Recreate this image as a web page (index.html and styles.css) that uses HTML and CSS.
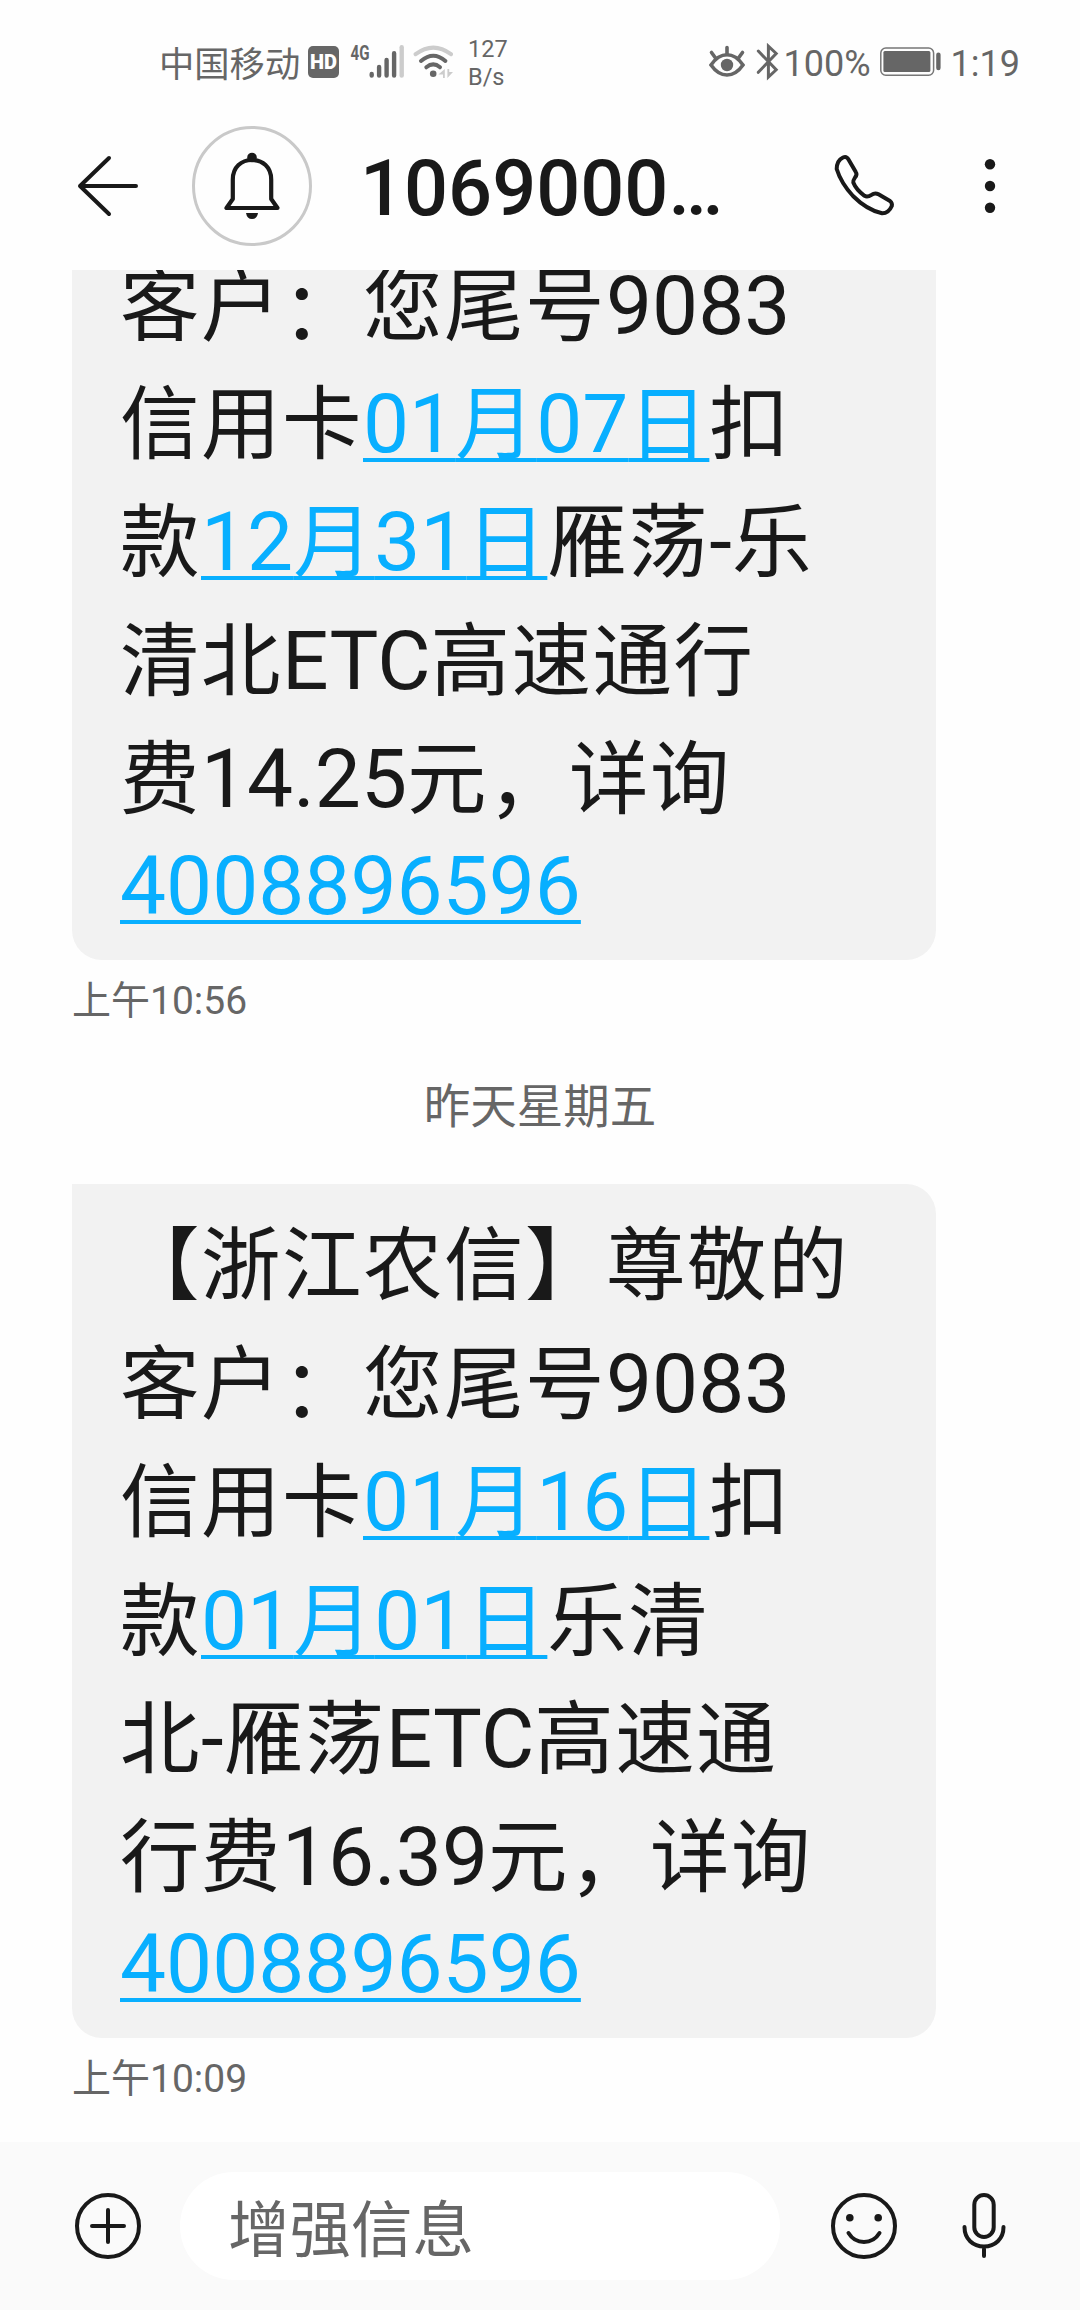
FILE: index.html
```html
<!DOCTYPE html>
<html lang="zh-CN">
<head>
    <meta charset="UTF-8">
    <meta name="viewport" content="width=device-width, initial-scale=1.0">
    <title>信息</title>
    <link rel="stylesheet" href="styles.css">
</head>
<body>
    <div class="status-bar">
        <div class="status-left">
            <span class="carrier">中国移动</span>
            <span class="hd">HD</span>
            <svg class="signal" width="56" height="36" viewBox="349 44 56 36">
                <text x="350.5" y="60" class="net-type" textLength="19" lengthAdjust="spacingAndGlyphs">4G</text>
                <g stroke="#666" stroke-width="4.4" stroke-linecap="round">
                    <path d="M371.7 74v1.6M379.1 67v8.6M386.6 60v15.6M394.1 53.3v22.3"/>
                    <path d="M401.7 47.3v28.3" stroke="#ccc"/>
                </g>
            </svg>
            <svg class="wifi" width="42" height="36" viewBox="413 44 42 36" fill="none" stroke="#666" stroke-width="4" stroke-linecap="round">
                <path d="M415.6 54.2Q433.3 41 451 54.2" stroke="#ccc"/>
                <path d="M421 61Q433.3 50.5 445.4 61"/>
                <path d="M426.3 67.3Q433.3 61.5 440 67.3"/>
                <circle cx="433.2" cy="73.7" r="3.3" fill="#666" stroke="none"/>
                <path d="M444.8 69v9h-1.8v-3.6h-4.6zM447.4 69v9l5.6-6h-3.8v-3z" fill="#ccc" stroke="none"/>
            </svg>
            <span class="speed">127<br>B/s</span>
        </div>
        <div class="status-right">
            <svg class="eye" width="38" height="36" viewBox="708 44 38 36" fill="none" stroke="#666" stroke-width="3.6" stroke-linecap="round">
                <path d="M711 65Q718 54.8 727 54.8T743 65Q736 75 727 75T711 65Z"/>
                <path d="M727 47.5v7M711.5 52.5l4 5.5M742.5 52.5l-4 5.5"/>
                <circle cx="727" cy="65" r="6.2" fill="#666" stroke="none"/>
            </svg>
            <svg class="bluetooth" width="24" height="38" viewBox="756 43 24 38" fill="none" stroke="#666" stroke-width="3" stroke-linecap="round">
                <path d="M758.3 51L776.2 69.8L768.4 77V46.2L776.2 53.5L758.3 72.3"/>
            </svg>
            <span class="percent">100%</span>
            <svg class="battery" width="62" height="30" viewBox="880 48 62 30" fill="#666">
                <rect x="880.8" y="49" width="52.8" height="27.2" rx="5" fill="none" stroke="#777" stroke-width="1.5"/>
                <rect x="883.4" y="52" width="47" height="21" rx="1.5"/>
                <rect x="936.2" y="53.6" width="4.4" height="17.6" rx="2.2"/>
            </svg>
            <span class="clock">1:19</span>
        </div>
    </div>

    <header class="header">
        <svg class="back" width="64" height="64" viewBox="76 154 64 64" fill="none" stroke="#191919" stroke-width="4" stroke-linecap="round" stroke-linejoin="round">
            <path d="M109 158L80 186L109 214M80 186H136"/>
        </svg>
        <div class="avatar">
            <svg width="60" height="68" viewBox="222 152 60 68" fill="none" stroke="#191919" stroke-width="4.2">
                <path d="M226.5 208H277.5L271.2 199V179.5C271.2 167 262.5 160 252 160S232.8 167 232.8 179.5V199Z" stroke-linejoin="round"/>
                <circle cx="252" cy="157.5" r="4.8" fill="#191919" stroke="none"/>
                <path d="M246 213H258Q257 219 252 219T246 213Z" fill="#191919" stroke="none"/>
            </svg>
        </div>
        <h1 class="title">1069000…</h1>
        <svg class="call" width="64" height="66" viewBox="831 153 64 66" fill="none" stroke="#191919" stroke-width="4" stroke-linejoin="round">
            <path d="M842 157.5Q835.8 160.5 835.7 169Q840 183 852 196Q866 210 881 213.3Q887.5 213.5 890.8 206Q891.5 203 889 201L877.5 194.3Q874 192.3 870.5 194.8Q866.5 197.5 863.5 195.8Q855 189.5 852.3 182.5Q852 180.5 854 177.5Q856.5 174.5 854.8 172L847.5 159.5Q845.5 156 842 157.5Z"/>
        </svg>
        <svg class="more" width="12" height="56" viewBox="0 0 12 56" fill="#191919">
            <circle cx="6" cy="6.2" r="5.2"/>
            <circle cx="6" cy="28" r="5.2"/>
            <circle cx="6" cy="49.8" r="5.2"/>
        </svg>
    </header>

    <main class="messages">
        <div class="bubble bubble-first">
            <p>客户<span class="colon">：</span>您尾号<span class="num">9083</span></p>
            <p>信用卡<a class="link"><span class="num">01</span>月<span class="num">07</span>日</a>扣</p>
            <p>款<a class="link"><span class="num">12</span>月<span class="num">31</span>日</a>雁荡<span class="num">-</span>乐</p>
            <p>清北<span class="num">ETC</span>高速通行</p>
            <p>费<span class="num">14.25</span>元<span class="comma">，</span>详询</p>
            <p class="phone"><a class="link"><span class="num">4008896596</span></a></p>
        </div>
        <div class="time">上午10:56</div>

        <div class="date">昨天星期五</div>

        <div class="bubble">
            <p>【浙江农信】尊敬的</p>
            <p>客户<span class="colon">：</span>您尾号<span class="num">9083</span></p>
            <p>信用卡<a class="link"><span class="num">01</span>月<span class="num">16</span>日</a>扣</p>
            <p>款<a class="link"><span class="num">01</span>月<span class="num">01</span>日</a>乐清</p>
            <p>北<span class="num">-</span>雁荡<span class="num">ETC</span>高速通</p>
            <p>行费<span class="num">16.39</span>元<span class="comma">，</span>详询</p>
            <p class="phone"><a class="link"><span class="num">4008896596</span></a></p>
        </div>
        <div class="time">上午10:09</div>
    </main>

    <footer class="compose">
        <svg class="add" width="68" height="68" viewBox="0 0 68 68" fill="none" stroke="#191919" stroke-width="4" stroke-linecap="round">
            <circle cx="34" cy="34" r="31"/>
            <path d="M34 18V50M18 34H50"/>
        </svg>
        <div class="input">增强信息</div>
        <svg class="emoji" width="68" height="68" viewBox="0 0 68 68" fill="none" stroke="#191919" stroke-width="4" stroke-linecap="round">
            <circle cx="34" cy="34" r="31"/>
            <path d="M18.5 41Q24 50 34 50T49.5 41"/>
            <circle cx="19.8" cy="25.7" r="3.8" fill="#191919" stroke="none"/>
            <circle cx="48.2" cy="25.7" r="3.8" fill="#191919" stroke="none"/>
        </svg>
        <svg class="mic" width="46" height="68" viewBox="0 0 46 68" fill="none" stroke="#191919" stroke-width="4" stroke-linecap="round">
            <rect x="13.3" y="3" width="19.4" height="42" rx="9.7"/>
            <path d="M3.5 35C3.5 47 12 54.5 23 54.5S42.5 47 42.5 35M23 55V64"/>
        </svg>
    </footer>
</body>
</html>
```
FILE: styles.css
```css
* {
    box-sizing: border-box;
}
body {
    margin: 0;
    width: 1080px;
    height: 2310px;
    display: flex;
    flex-direction: column;
    overflow: hidden;
    background-color: #fefefe;
    color: #191919;
    font-family: Roboto, "Noto Sans CJK SC", sans-serif;
}
svg {
    display: block;
    flex-shrink: 0;
}

/* status bar */
.status-bar {
    height: 102px;
    padding: 22px 60px 0 159px;
    display: flex;
    justify-content: space-between;
    color: #666;
}
.status-left,
.status-right {
    display: flex;
    align-items: center;
    height: 80px;
}
.carrier {
    width: 149px;
    padding-top: 5px;
    font-size: 35.3px;
    line-height: 52px;
}
.hd {
    width: 31px;
    height: 32px;
    margin-right: 10px;
    border-radius: 5px;
    background-color: #666;
    color: #fff;
    font-size: 20px;
    font-weight: 900;
    line-height: 33px;
    text-align: center;
}
.net-type {
    font-size: 21px;
    font-weight: 700;
    fill: #666;
}
.wifi {
    margin-left: 8px;
}
.speed {
    margin-left: 13px;
    padding-top: 2px;
    font-size: 23.5px;
    line-height: 28px;
}
.bluetooth {
    margin-left: 10px;
}
.percent {
    width: 95px;
    margin-left: 4px;
    padding-top: 3px;
    font-size: 36px;
}
.battery {
    margin-left: 1px;
}
.clock {
    margin-left: 9px;
    padding-top: 3px;
    font-size: 36px;
}

/* header */
.header {
    height: 168px;
    padding: 0 84px 0 76px;
    display: flex;
    align-items: center;
}
.avatar {
    width: 120px;
    height: 120px;
    margin-left: 52px;
    display: flex;
    align-items: center;
    justify-content: center;
    border: 3px solid #c9c9c9;
    border-radius: 50%;
}
.title {
    width: 472px;
    margin: 0 0 0 48px;
    padding-top: 6px;
    font-size: 77.5px;
    font-weight: 500;
    line-height: 100px;
}
.call {
    margin-left: 0;
}
.more {
    margin-left: 88px;
}

/* message list */
.messages {
    height: 1872px;
    overflow: hidden;
}
.bubble {
    display: flow-root;
    width: 864px;
    height: 854px;
    margin-left: 72px;
    padding: 23px 48px 0;
    border-radius: 0 30px 30px 30px;
    background-color: #f2f2f2;
    font-size: 79.5px;
    letter-spacing: 1.5px;
}
/* scrolled part way under the header */
.bubble-first {
    height: 690px;
    padding-top: 0;
    border-radius: 0 0 30px 30px;
}
.bubble p {
    margin: 0;
    height: 118.2px;
    line-height: 118px;
    white-space: nowrap;
}
.bubble-first p:first-child {
    margin-top: -23px;
}
.bubble .phone {
    margin-top: -11px;
}
.num {
    font-size: 82px;
    letter-spacing: 0;
}
.colon,
.comma {
    line-height: 0;
    vertical-align: -5px;
}
.comma {
    vertical-align: -3px;
}
.link {
    color: #08afff;
    text-decoration: underline;
    text-decoration-thickness: 4px;
    text-underline-offset: 6px;
    text-decoration-skip-ink: none;
}
.time {
    height: 80px;
    margin-left: 72px;
    color: #666;
    font-size: 39px;
    line-height: 82px;
}
.date {
    height: 144px;
    color: #666;
    font-size: 46.5px;
    line-height: 134px;
    text-align: center;
}

/* compose bar */
.compose {
    height: 168px;
    padding: 0 73px 0 74px;
    display: flex;
    align-items: center;
    background-color: #fafafa;
}
.input {
    width: 600px;
    height: 108px;
    margin-left: 38px;
    padding: 5px 0 0 48px;
    border-radius: 54px;
    background-color: #fff;
    color: #666;
    font-size: 61.5px;
    line-height: 108px;
}
.emoji {
    margin-left: 50px;
}
.mic {
    margin-left: 63px;
}
```
